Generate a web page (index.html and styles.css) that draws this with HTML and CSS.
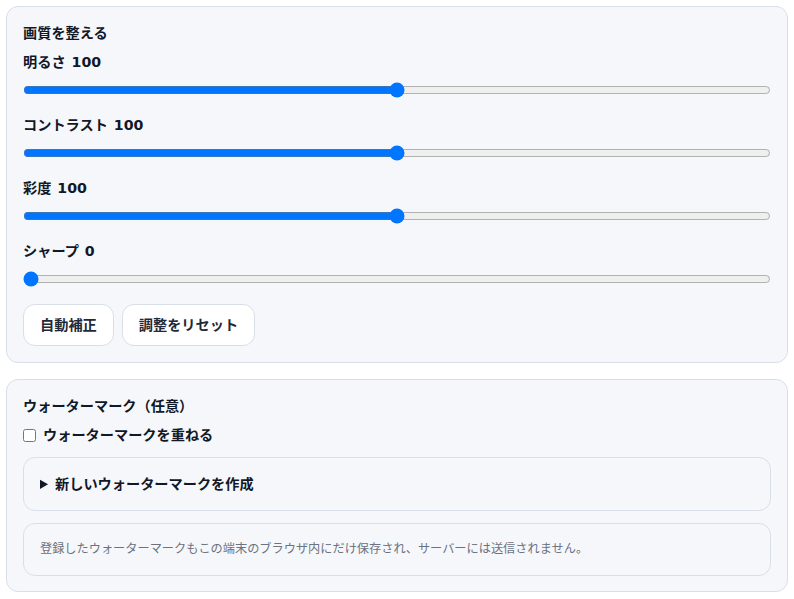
FILE: index.html
```html
<!DOCTYPE html>
<html lang="ja">
<head>
<meta charset="utf-8">
<link rel="stylesheet" href="styles.css">
</head>
<body>
<section class="card">
  <h3 class="card-title">画質を整える</h3>
  <div class="control">
    <label class="control-label">明るさ <span class="val">100</span></label>
    <input type="range" min="0" max="200" value="100" class="slider">
  </div>
  <div class="control">
    <label class="control-label">コントラスト <span class="val">100</span></label>
    <input type="range" min="0" max="200" value="100" class="slider">
  </div>
  <div class="control">
    <label class="control-label">彩度 <span class="val">100</span></label>
    <input type="range" min="0" max="200" value="100" class="slider">
  </div>
  <div class="control">
    <label class="control-label">シャープ <span class="val">0</span></label>
    <input type="range" min="0" max="100" value="0" class="slider">
  </div>
  <div class="buttons">
    <button class="btn">自動補正</button>
    <button class="btn">調整をリセット</button>
  </div>
</section>
<section class="card card-wm">
  <h3 class="card-title">ウォーターマーク（任意）</h3>
  <label class="check-row"><input type="checkbox" class="check"> ウォーターマークを重ねる</label>
  <details class="box">
    <summary class="summary">新しいウォーターマークを作成</summary>
  </details>
  <div class="box note">登録したウォーターマークもこの端末のブラウザ内にだけ保存され、サーバーには送信されません。</div>
</section>
</body>
</html>
```
FILE: styles.css
```css
html, body {
  margin: 0;
  padding: 0;
  background: #ffffff;
}
body {
  padding: 6px 6px 6px 6px;
  font-family: "DejaVu Sans", "Noto Sans CJK JP", sans-serif;
  color: #111827;
  font-size: 14.2px;
  line-height: 20px;
}
.card {
  background: #f6f7fb;
  border: 1px solid #d9dfe8;
  border-radius: 12px;
  padding: 16px;
  display: flex;
  flex-direction: column;
}
.card-wm {
  margin-top: 16px;
  padding-bottom: 15px;
}
.card-title {
  margin: 0;
  font-size: 14.2px;
  font-weight: bold;
  line-height: 20px;
}
.control {
  display: flex;
  flex-direction: column;
  margin-top: 9px;
}
.control + .control {
  margin-top: 17px;
}
.control-label {
  font-weight: bold;
  line-height: 20px;
}
.val {
  margin-left: 1px;
}
.slider {
  display: block;
  width: 100%;
  margin: 10px 0 0;
  height: 16px;
  accent-color: #0075ff;
}
.buttons {
  display: flex;
  gap: 8px;
  margin-top: 17px;
}
.btn {
  font-family: inherit;
  font-size: 14.2px;
  font-weight: bold;
  line-height: 20px;
  color: #1f2937;
  background: #ffffff;
  border: 1px solid #d9dfe8;
  border-radius: 12px;
  padding: 10px 16px;
}
.check-row {
  display: flex;
  align-items: center;
  font-weight: bold;
  margin-top: 9px;
  gap: 7px;
}
.check {
  margin: 0;
  width: 13px;
  height: 13px;
}
.box {
  margin-top: 12px;
  border: 1px solid #d9dfe8;
  border-radius: 12px;
  padding: 16px;
  background: #f6f7fb;
}
.summary {
  font-weight: bold;
  line-height: 20px;
  cursor: pointer;
}
.note {
  font-size: 12.2px;
  line-height: 19px;
  color: #6b7280;
}
```
